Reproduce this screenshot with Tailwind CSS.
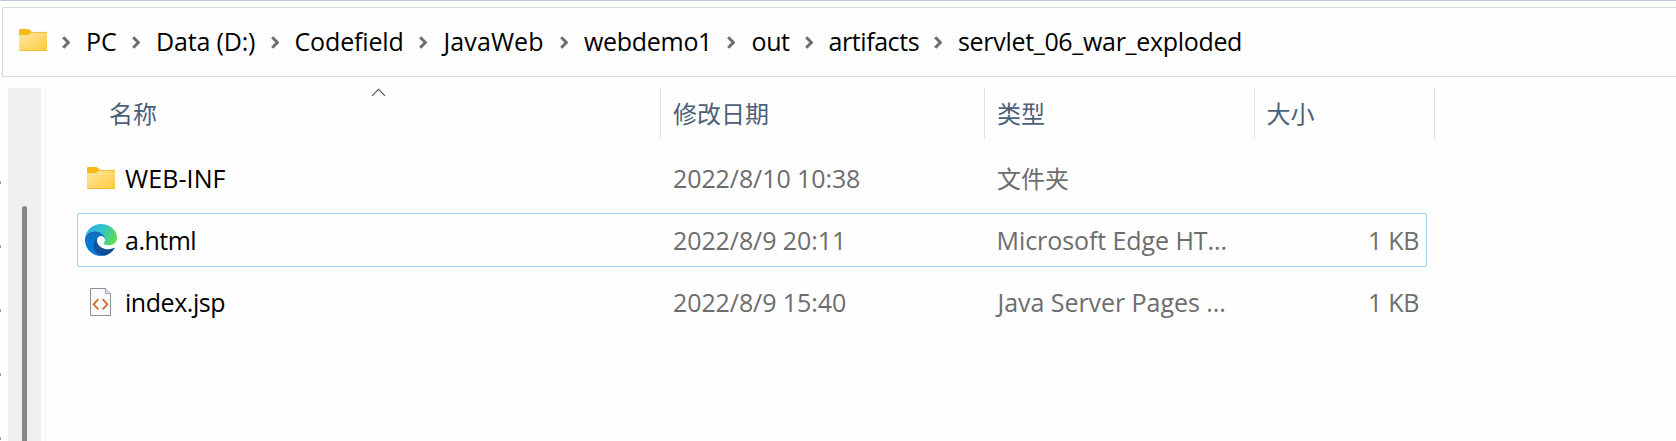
<!DOCTYPE html>
<html lang="zh-CN">
<head>
<meta charset="utf-8">
<title>servlet_06_war_exploded</title>
<script src="https://cdn.jsdelivr.net/npm/@tailwindcss/browser@4"></script>
</head>
<body class="flex h-[441px] w-[1676px] flex-col overflow-hidden bg-[#fefefe] font-['Open_Sans','Noto_Sans_CJK_SC',sans-serif] text-[25px] leading-none whitespace-nowrap text-black">
<svg class="absolute size-0" aria-hidden="true">
  <defs>
    <linearGradient id="fold" x1="0" y1="0" x2="1" y2="1"><stop stop-color="#ffe9a5"/><stop offset="1" stop-color="#ffc93c"/></linearGradient>
    <linearGradient id="eTop" x1="0" y1=".3" x2="1" y2=".6"><stop stop-color="#35a9e8"/><stop offset=".5" stop-color="#2fc5c8"/><stop offset="1" stop-color="#62dc4c"/></linearGradient>
    <linearGradient id="eMid" x1=".3" y1="0" x2=".5" y2="1"><stop stop-color="#1464b0"/><stop offset=".45" stop-color="#087bd4"/><stop offset="1" stop-color="#0b79d3"/></linearGradient>
    <linearGradient id="eLow" x1="0" y1="0" x2="1" y2=".6"><stop stop-color="#1059a4"/><stop offset="1" stop-color="#0c4b93"/></linearGradient>
    <symbol id="folder" viewBox="0 0 28 22">
      <path d="M0 1.200Q0 0 1.200 0H9Q10 0 10.800 .8L13 3L10 7H0Z" fill="#fbb917"/>
      <path d="M0 6H8.500Q9.500 6 10.300 5.200L12.500 3H27Q28 3 28 4V21Q28 22 27 22H1Q0 22 0 21Z" fill="url(#fold)"/>
      <path d="M12 3.400H27.600M.5 21.600H27.500" stroke="#ebb02c" stroke-width=".8" fill="none"/>
    </symbol>
    <symbol id="chev" viewBox="0 0 8 13"><path d="M1.200 1.200L6.400 6.500L1.200 11.800" fill="none" stroke="#6d6d6d" stroke-width="3"/></symbol>
  </defs>
</svg>

<div class="h-px shrink-0 bg-[#b9c9d9]"></div>

<nav class="mt-[6px] ml-[2px] flex h-[70px] shrink-0 items-center border border-r-0 border-[#d9d9d9] pb-[2px] pl-[16px]">
  <svg class="-mt-[2px] mr-[15px] h-[22px] w-[28px] shrink-0"><use href="#folder"/></svg>
  <div class="flex w-[70px] items-center"><svg class="mt-[3px] h-[13px] w-[8px]"><use href="#chev"/></svg><span class="ml-[16px]">PC</span></div>
  <div class="flex w-[139px] items-center"><svg class="mt-[3px] h-[13px] w-[8px]"><use href="#chev"/></svg><span class="ml-[16px] tracking-[-0.170px]">Data (D:)</span></div>
  <div class="flex w-[148px] items-center"><svg class="mt-[3px] h-[13px] w-[8px]"><use href="#chev"/></svg><span class="ml-[15.500px] tracking-[-0.150px]">Codefield</span></div>
  <div class="flex w-[141px] items-center"><svg class="mt-[3px] h-[13px] w-[8px]"><use href="#chev"/></svg><span class="ml-[16.500px] tracking-[0.100px]">JavaWeb</span></div>
  <div class="flex w-[167px] items-center"><svg class="mt-[3px] h-[13px] w-[8px]"><use href="#chev"/></svg><span class="ml-[16px] tracking-[-0.300px]">webdemo1</span></div>
  <div class="flex w-[78px] items-center"><svg class="mt-[3px] h-[13px] w-[8px]"><use href="#chev"/></svg><span class="ml-[16.500px] tracking-[-0.400px]">out</span></div>
  <div class="flex w-[129px] items-center"><svg class="mt-[3px] h-[13px] w-[8px]"><use href="#chev"/></svg><span class="ml-[15.500px] tracking-[-0.420px]">artifacts</span></div>
  <div class="flex items-center"><svg class="mt-[3px] h-[13px] w-[8px]"><use href="#chev"/></svg><span class="ml-[16px] tracking-[-0.310px]">servlet_06_war_exploded</span></div>
</nav>

<main class="mt-[11px] flex min-h-0 flex-1">
  <div class="flex w-[8px] shrink-0 flex-col gap-[61px] pt-[93px]">
    <i class="h-[3px] w-px shrink-0 bg-[#999]"></i><i class="h-[3px] w-px shrink-0 bg-[#999]"></i><i class="h-[3px] w-px shrink-0 bg-[#999]"></i><i class="h-[3px] w-px shrink-0 bg-[#999]"></i><i class="h-[3px] w-px shrink-0 bg-[#999]"></i>
  </div>
  <div class="flex w-[33px] shrink-0 bg-[#efefef] pt-[118px] pl-[14px]"><div class="w-[5px] rounded-t-full bg-[#858585]"></div></div>
  <div class="ml-[3px] w-[2px] shrink-0 bg-[#f7f7f7]"></div>

  <section class="flex flex-1 flex-col pl-[31px]">
    <header class="flex h-[51px] w-[1358px] font-['Noto_Sans_CJK_SC',sans-serif] text-[24px] text-[#4c607a]">
      <div class="relative flex w-[584px] items-center border-r border-[#e2e2e2] pb-px pl-[32px]">
        名称
        <svg class="absolute top-0 left-[294px] h-[9px] w-[15px]" viewBox="0 0 15 9"><path d="M1 7.800L7.500 1.300L14 7.800" fill="none" stroke="#505050" stroke-width="1.100"/></svg>
      </div>
      <div class="flex w-[324px] items-center border-r border-[#e2e2e2] pb-px pl-[12px]">修改日期</div>
      <div class="flex w-[270px] items-center border-r border-[#e2e2e2] pb-px pl-[12px]">类型</div>
      <div class="flex w-[180px] items-center border-r border-[#e2e2e2] pb-px pl-[11.500px]">大小</div>
    </header>

    <div class="mt-[12px] flex w-[1350px] flex-col gap-[8px] text-[#6d6d6d]">
      <div class="flex h-[54px] items-center border border-transparent">
        <div class="flex w-[595px] items-center pl-[9px] text-black"><svg class="mt-[-1px] mr-[10px] h-[22px] w-[28px]"><use href="#folder"/></svg><span class="tracking-[0.100px]">WEB-INF</span></div>
        <span class="w-[324px] tracking-[-0.090px]">2022/8/10 10:38</span>
        <span class="font-['Noto_Sans_CJK_SC',sans-serif] text-[24px]">文件夹</span>
      </div>
      <div class="flex h-[54px] items-center rounded-[2px] border border-[#99d1ff]">
        <div class="flex w-[595px] items-center pl-[7px] text-black">
          <svg class="mr-[8px] h-[32px] w-[32px]" viewBox="0 0 256 256">
            <path d="M231 190.500a94 94 0 0 1-10.500 4.700 102 102 0 0 1-36 6.500c-47.500 0-88.800-32.700-88.800-74.600a31.600 31.600 0 0 1 16.500-27.500c-43 1.800-54 46.600-54 72.800 0 74.200 68.400 81.700 83.100 81.700 8 0 20-2.300 27.200-4.600l1.300-.4a128 128 0 0 0 66.600-52.800 4 4 0 0 0-5.400-5.800z" fill="url(#eLow)"/>
            <path d="M105.700 241.400a79 79 0 0 1-22.700-21.300A80.700 80.700 0 0 1 112.200 99.600c3.200-1.500 8.500-4.100 15.600-4a32.400 32.400 0 0 1 25.700 13 31.900 31.900 0 0 1 6.300 18.700c0-.2 24.500-79.600-80-79.600-43.900 0-80 41.700-80 78.200a130 130 0 0 0 12.100 56 128 128 0 0 0 156.400 67 75.500 75.500 0 0 1-62.600-7.500z" fill="url(#eMid)"/>
            <path d="M152.300 148.900c-.8 1-3.300 2.500-3.300 5.700 0 2.600 1.700 5.200 4.800 7.300 14.400 10 41.500 8.700 41.600 8.700a59.600 59.600 0 0 0 30.300-8.300A61.400 61.400 0 0 0 256.100 109.400c.3-22.400-8-37.300-11.300-43.900C223.500 23.900 177.700 0 127.800 0A128 128 0 0 0-.2 126.200c.5-36.500 36.800-66 80-66 3.500 0 23.500.3 42 10.100 16.300 8.600 24.900 18.900 30.800 29.200 6.200 10.700 7.300 24.100 7.300 29.500s-2.700 13.300-7.600 19.900z" fill="url(#eTop)"/>
          </svg>
          <span class="tracking-[-0.500px]">a.html</span>
        </div>
        <span class="w-[323px] tracking-[-0.090px]">2022/8/9 20:11</span>
        <span class="w-[300px] pl-[0.500px] tracking-[-0.080px]">Microsoft Edge HT...</span>
        <span class="flex-1 pr-[7px] text-right tracking-[-0.300px]">1 KB</span>
      </div>
      <div class="flex h-[54px] items-center border border-transparent">
        <div class="flex w-[595px] items-center pl-[12px] text-black">
          <svg class="mt-[-1px] mr-[14px] h-[28px] w-[21px]" viewBox="0 0 21 28">
            <path d="M.5 .5H15.500L20.500 5.500V27.500H.5Z" fill="#f9fafb" stroke="#8b8f92"/>
            <path d="M15.500 .5V5.500H20.500" fill="#e5e5e5" stroke="#8b8f92" stroke-width=".8"/>
            <path d="M8.300 11.200L3.700 16.300L8.300 21.400M12.700 11.200L17.300 16.300L12.700 21.400" fill="none" stroke="#d4743c" stroke-width="2"/>
          </svg>
          <span class="tracking-[-0.450px]">index.jsp</span>
        </div>
        <span class="w-[323px] tracking-[-0.090px]">2022/8/9 15:40</span>
        <span class="w-[300px] pl-[1.500px] tracking-[-0.050px]">Java Server Pages ...</span>
        <span class="flex-1 pr-[7px] text-right tracking-[-0.300px]">1 KB</span>
      </div>
    </div>
  </section>
</main>
</body>
</html>
